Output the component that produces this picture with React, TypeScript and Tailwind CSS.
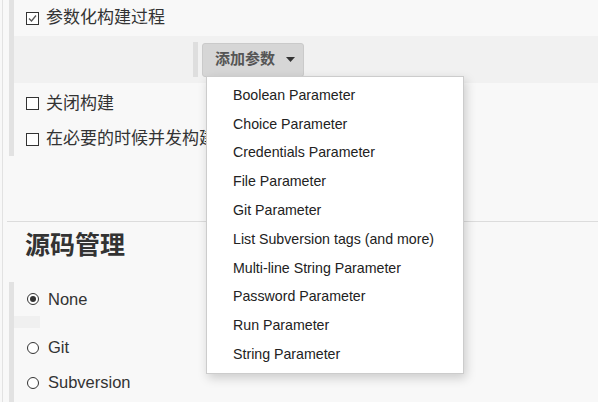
import React from "react";

const cjk = { fontFamily: '"Liberation Sans", "Noto Sans CJK SC", sans-serif' };

function Box({ checked }: { checked?: boolean }) {
  return (
    <span className="relative inline-block w-[13px] h-[13px] border border-[#333] bg-white shrink-0">
      {checked && (
        <svg className="absolute left-[1px] top-[1px]" width="9" height="9" viewBox="0 0 9 9">
          <path d="M1 4.5 L3.5 7 L8 1.5" fill="none" stroke="#555" strokeWidth="1.3" />
        </svg>
      )}
    </span>
  );
}

function Radio({ checked }: { checked?: boolean }) {
  return (
    <span className="relative inline-flex items-center justify-center w-[12px] h-[12px] rounded-full border border-[#333] bg-white shrink-0">
      {checked && <span className="w-[6px] h-[6px] rounded-full bg-[#333]" />}
    </span>
  );
}

const items = [
  "Boolean Parameter",
  "Choice Parameter",
  "Credentials Parameter",
  "File Parameter",
  "Git Parameter",
  "List Subversion tags (and more)",
  "Multi-line String Parameter",
  "Password Parameter",
  "Run Parameter",
  "String Parameter",
];

export default function App() {
  return (
    <div className="relative w-[598px] h-[402px] overflow-hidden bg-[#f8f8f8] text-[#333]" style={cjk}>
      <div className="absolute left-[2px] top-0 bottom-0 w-px bg-[#e2e2e2]" />
      <div className="ml-[9px] border-l-[5px] border-[#e2e2e2]">
        <div className="h-[36px] flex items-center pl-[12px] gap-[7px] text-[17px]">
          <Box checked />
          <span>参数化构建过程</span>
        </div>
        <div className="h-[47px] bg-[#f1f1f1] flex items-center pl-[179px] gap-[4px]">
          <div className="w-[5px] h-[35px] bg-[#dedede]" />
          <div className="h-[34px] w-[102px] rounded-[3px] bg-[#d6d6d6] border border-[#cacaca] flex items-center pl-[12px] gap-[11px] text-[15px] font-bold text-[#555]">
            <span>添加参数</span>
            <svg width="9" height="5" viewBox="0 0 9 5">
              <path d="M0 0 L9 0 L4.5 5 Z" fill="#333" />
            </svg>
          </div>
        </div>
        <div className="h-[37px] flex items-center pl-[12px] gap-[7px] text-[17px] mt-[2px]">
          <Box />
          <span>关闭构建</span>
        </div>
        <div className="h-[34px] flex items-center pl-[12px] gap-[7px] text-[17px]">
          <Box />
          <span className="whitespace-nowrap">在必要的时候并发构建</span>
        </div>
      </div>
      <div className="ml-[7px] mt-[65px] border-t border-[#dcdcdc]" />
      <div className="pl-[25px] pt-[8px] h-[60px] text-[25px] font-bold text-[#333] leading-[30px]">源码管理</div>
      <div className="ml-[9px] border-l-[5px] border-[#e2e2e2] h-[130px]">
        <div className="h-[34px] flex items-center pl-[13px] gap-[9px] text-[16.5px]">
          <Radio checked />
          <span>None</span>
        </div>
        <div className="w-[26px] h-[12px] bg-[#f0f0f0]" />
        <div className="h-[2px]" />
        <div className="h-[35px] flex items-center pl-[13px] gap-[9px] text-[16.5px]">
          <Radio />
          <span>Git</span>
        </div>
        <div className="h-[35px] flex items-center pl-[13px] gap-[9px] text-[16.5px]">
          <Radio />
          <span>Subversion</span>
        </div>
      </div>

      <div className="absolute left-[206px] top-[76px] w-[258px] bg-white border border-[#cccccc] shadow-[2px_4px_10px_rgba(0,0,0,0.18)] py-[4px]">
        {items.map((t) => (
          <div key={t} className="h-[28.8px] flex items-center pl-[26px] text-[14.2px] text-[#222] whitespace-nowrap">
            {t}
          </div>
        ))}
      </div>
    </div>
  );
}
